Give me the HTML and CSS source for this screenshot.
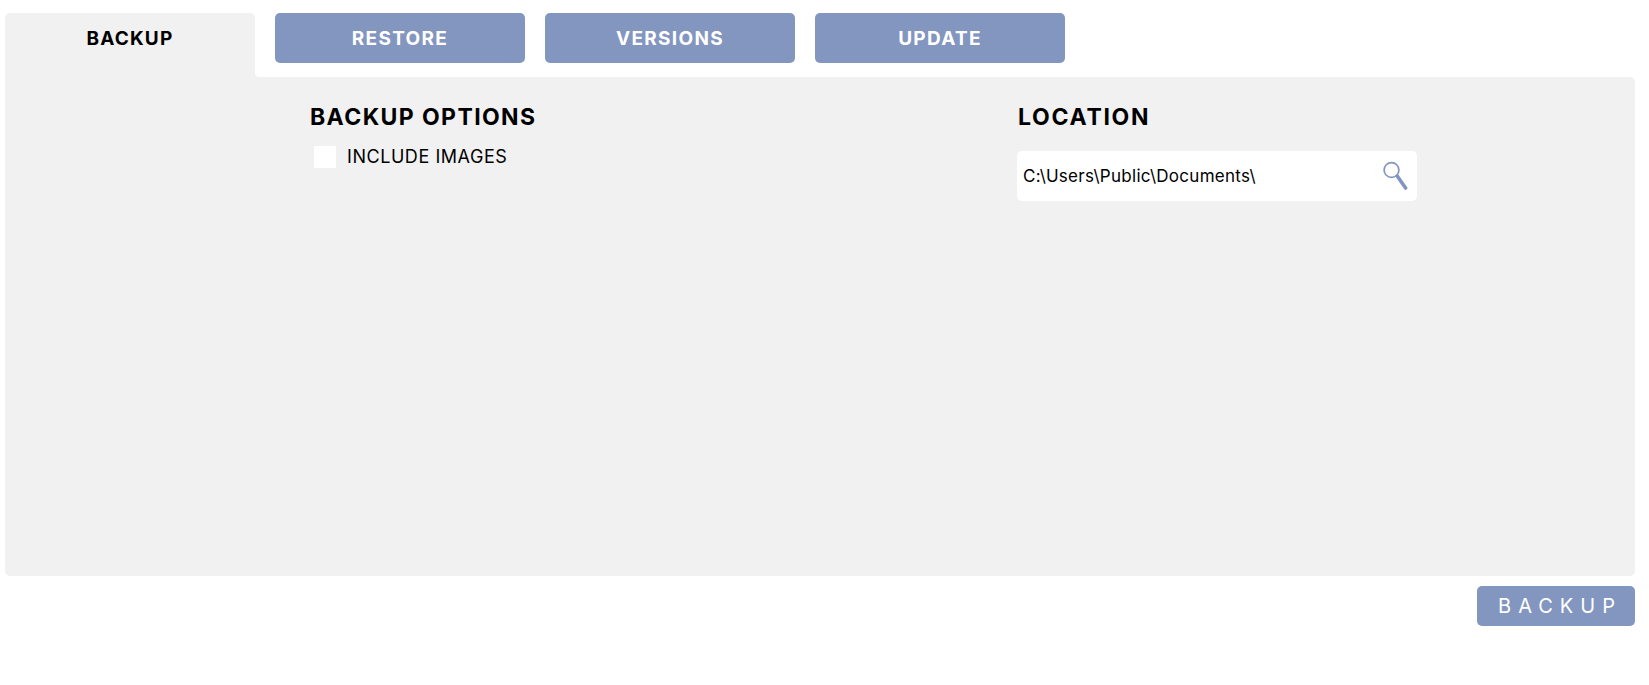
FILE: index.html
```html
<!DOCTYPE html>
<html lang="en">
<head>
<meta charset="utf-8">
<title>Backup</title>
<link rel="stylesheet" href="styles.css">
</head>
<body>
<nav class="tabs">
  <div class="tab tab-active">BACKUP</div>
  <div class="tab">RESTORE</div>
  <div class="tab">VERSIONS</div>
  <div class="tab">UPDATE</div>
</nav>
<main class="panel">
  <section class="col-options">
    <h2 class="heading">BACKUP OPTIONS</h2>
    <label class="check-row"><span class="check"></span><span>INCLUDE IMAGES</span></label>
  </section>
  <section class="col-location">
    <h2 class="heading heading-location">LOCATION</h2>
    <div class="path-field">
      <span class="path-text">C:\Users\Public\Documents\</span>
      <svg class="search-icon" width="25" height="30" viewBox="0 0 25 30" aria-hidden="true">
        <circle cx="8.5" cy="9" r="7.4" fill="none" stroke="#8396c0" stroke-width="1.7"/>
        <path d="M14.2 15 L22.6 27" fill="none" stroke="#8396c0" stroke-width="3.6" stroke-linecap="round"/>
      </svg>
    </div>
  </section>
</main>
<div class="actions"><button class="backup-btn" type="button">BACKUP</button></div>
</body>
</html>
```
FILE: styles.css
```css
* { box-sizing: border-box; }
html, body { height: 100%; }
body {
  margin: 0;
  padding: 13px 14px 0 5px;
  background: #fff;
  color: #000;
  font-family: Inter, "Liberation Sans", sans-serif;
}
.tabs {
  display: flex;
  gap: 20px;
  height: 64px;
  align-items: flex-start;
}
.tab {
  width: 250px;
  height: 50px;
  display: flex;
  align-items: center;
  justify-content: center;
  background: #8396c0;
  color: #fff;
  border-radius: 5px;
  font-size: 19px;
  font-weight: 700;
  letter-spacing: 1.3px;
}
.tab-active {
  position: relative;
  height: 64px;
  padding-bottom: 14px;
  background: #f1f1f1;
  color: #000;
  border-radius: 5px 5px 0 0;
  letter-spacing: 1.15px;
}
.tab-active::after {
  content: "";
  position: absolute;
  left: 100%;
  bottom: 0;
  width: 5px;
  height: 5px;
  background: radial-gradient(circle at 100% 0, transparent 5px, #f1f1f1 5.5px);
}
.panel {
  display: flex;
  height: 499px;
  padding: 26px 0 0 305px;
  background: #f1f1f1;
  border-radius: 0 5px 5px 5px;
}
.col-options { width: 707px; }
.col-location { width: 400px; }
.heading {
  margin: 0;
  font-size: 23px;
  line-height: 28px;
  font-weight: 700;
  letter-spacing: 1.4px;
}
.heading-location { padding-left: 1px; letter-spacing: 1.7px; }
.check-row {
  display: flex;
  align-items: center;
  gap: 11px;
  margin: 15px 0 0 4px;
  font-size: 18px;
  line-height: 22px;
  letter-spacing: 0.55px;
}
.check {
  width: 22px;
  height: 22px;
  background: #fff;
}
.path-field {
  display: flex;
  align-items: center;
  justify-content: space-between;
  width: 400px;
  height: 50px;
  margin-top: 20px;
  padding: 0 9px 0 6px;
  background: #fff;
  border-radius: 5px;
  font-size: 17px;
  letter-spacing: 0.28px;
}
.search-icon { flex: none; }
.actions {
  display: flex;
  justify-content: flex-end;
  margin-top: 10px;
}
.backup-btn {
  width: 158px;
  height: 40px;
  padding: 0 0 0 8px;
  border: 0;
  border-radius: 5px;
  background: #8396c0;
  color: #fff;
  font-family: inherit;
  font-size: 20px;
  font-weight: 400;
  letter-spacing: 7px;
}
```
